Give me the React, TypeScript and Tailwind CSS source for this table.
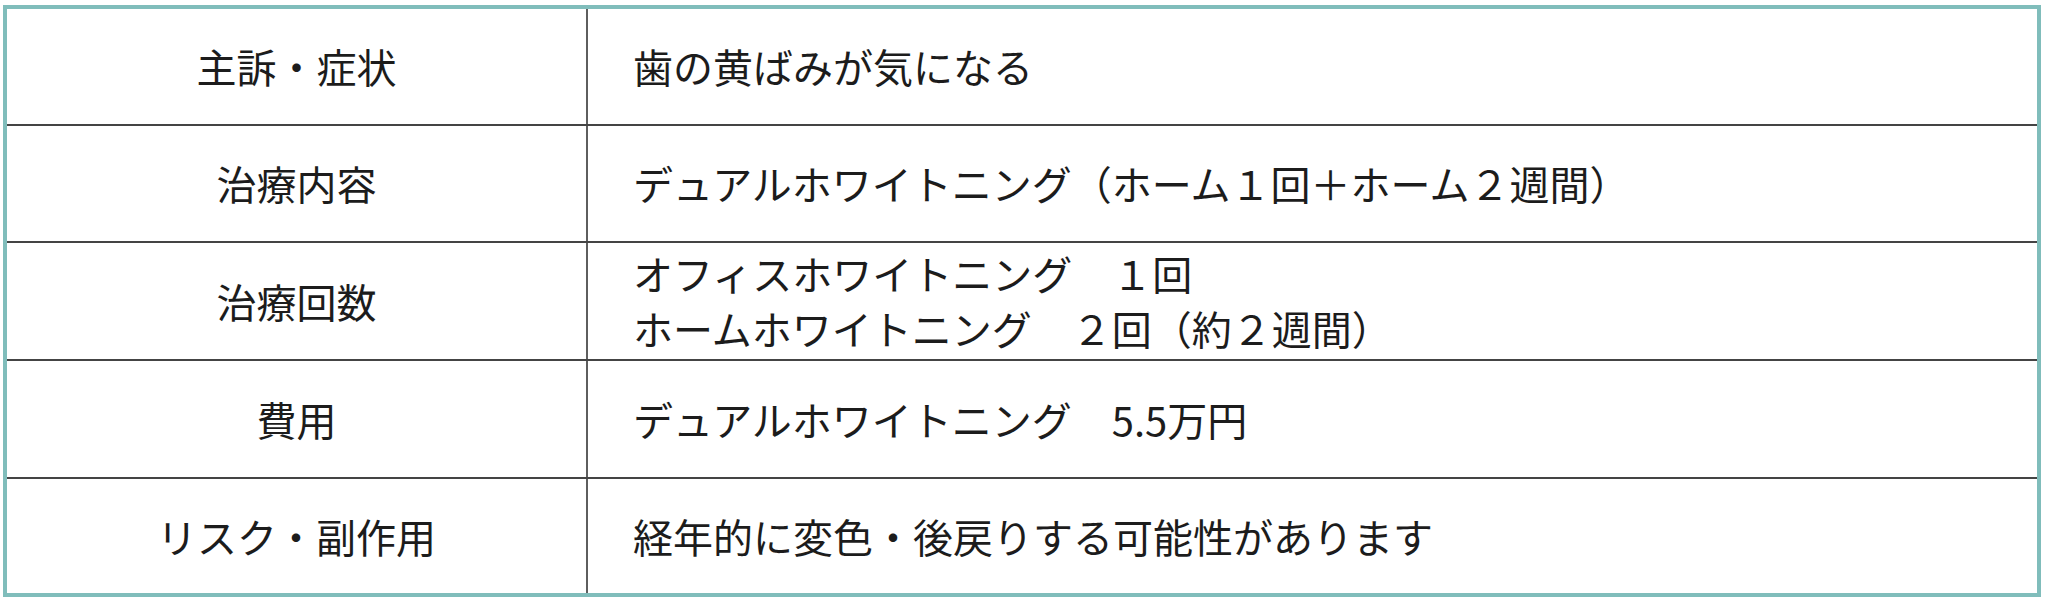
const rows = [
  { label: "主訴・症状", lines: ["歯の黄ばみが気になる"], h: "h-[117px] border-b-2" },
  { label: "治療内容", lines: ["デュアルホワイトニング（ホーム１回＋ホーム２週間）"], h: "h-[117px] border-b-2" },
  {
    label: "治療回数",
    lines: ["オフィスホワイトニング　１回", "ホームホワイトニング　２回（約２週間）"],
    h: "h-[118px] border-b-2",
  },
  { label: "費用", lines: ["デュアルホワイトニング　5.5万円"], h: "h-[118px] border-b-2" },
  { label: "リスク・副作用", lines: ["経年的に変色・後戻りする可能性があります"], h: "h-[114px]" },
];

export default function App() {
  return (
    <div className="w-[2048px] h-[603px] bg-white pl-[3px] pt-[5px] font-['Noto_Sans_CJK_JP',sans-serif] text-[#1c1c1c]">
      {/* table box */}
      <div className="w-[2038px] h-[592px] border-4 border-[#80bdbb] flex flex-col">
        {rows.map((row, i) => (
          <div key={i} className={`flex border-[#444] ${row.h}`}>
            <div className="w-[581px] shrink-0 border-r-2 border-[#5e5e5e] flex items-center justify-center text-[40px] leading-[55px]">
              {row.label}
            </div>
            <div className="flex-1 flex flex-col justify-center pl-[45px] text-[40px] leading-[55px]">
              {row.lines.map((line, j) => (
                <div key={j} className="whitespace-pre">{line}</div>
              ))}
            </div>
          </div>
        ))}
      </div>
    </div>
  );
}
